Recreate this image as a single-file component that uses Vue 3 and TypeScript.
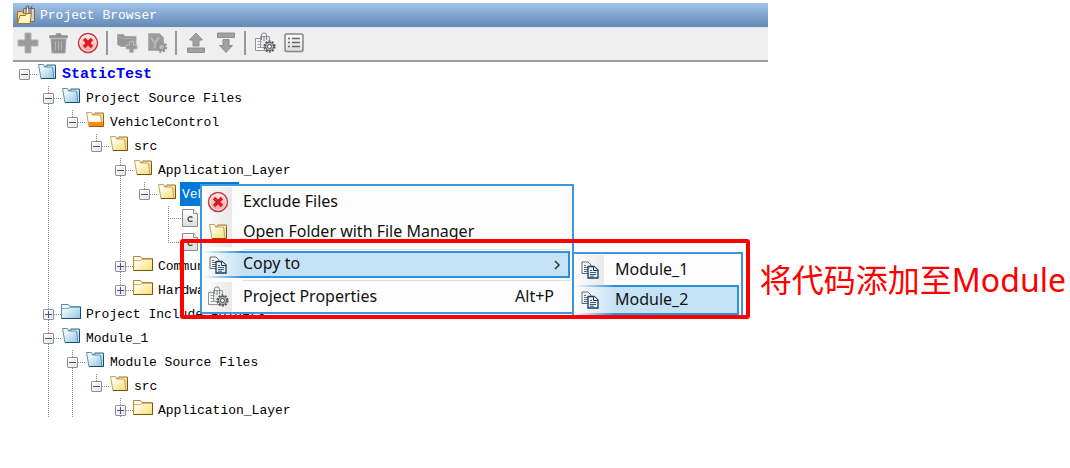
<script setup lang="ts">
type Guide = 'none' | 'full' | 'upper'

interface TreeRow {
  label: string
  guides: Guide[]
  node: Guide
  box?: 'minus' | 'plus'
  icon: string
  kind?: 'root' | 'selected' | 'file'
}

const o: Guide = 'none'
const f: Guide = 'full'
const u: Guide = 'upper'

const rows: TreeRow[] = [
  { label: 'StaticTest', guides: [], node: o, box: 'minus', icon: 'open-blue', kind: 'root' },
  { label: 'Project Source Files', guides: [o], node: f, box: 'minus', icon: 'open-blue' },
  { label: 'VehicleControl', guides: [o, f], node: u, box: 'minus', icon: 'open-orange' },
  { label: 'src', guides: [o, f, o], node: u, box: 'minus', icon: 'open-yellow' },
  { label: 'Application_Layer', guides: [o, f, o, o], node: f, box: 'minus', icon: 'open-yellow' },
  { label: 'Vehicle', guides: [o, f, o, o, f], node: u, box: 'minus', icon: 'open-yellow', kind: 'selected' },
  { label: '', guides: [o, f, o, o, f, o], node: f, icon: 'c-file', kind: 'file' },
  { label: '', guides: [o, f, o, o, f, o], node: u, icon: 'c-file', kind: 'file' },
  { label: 'Commun', guides: [o, f, o, o], node: f, box: 'plus', icon: 'closed-yellow' },
  { label: 'Hardware', guides: [o, f, o, o], node: u, box: 'plus', icon: 'closed-yellow' },
  { label: 'Project Include Folders', guides: [o], node: f, box: 'plus', icon: 'closed-blue' },
  { label: 'Module_1', guides: [o], node: f, box: 'minus', icon: 'open-blue' },
  { label: 'Module Source Files', guides: [o, f], node: f, box: 'minus', icon: 'open-blue' },
  { label: 'src', guides: [o, f, f], node: u, box: 'minus', icon: 'open-yellow' },
  { label: 'Application_Layer', guides: [o, f, f, o], node: f, box: 'plus', icon: 'closed-yellow' },
]

const toolGroups = [
  [
    { name: 'Add', icon: 'add' },
    { name: 'Delete', icon: 'trash' },
    { name: 'Exclude', icon: 'exclude' },
  ],
  [
    { name: 'Add folder', icon: 'folder-add' },
    { name: 'File settings', icon: 'file-gear' },
  ],
  [
    { name: 'Move up', icon: 'up' },
    { name: 'Move down', icon: 'down' },
  ],
  [
    { name: 'Project properties', icon: 'properties' },
    { name: 'List view', icon: 'list' },
  ],
]
</script>

<template>
  <svg class="defs" aria-hidden="true">
    <defs>
      <linearGradient id="blue" x1="0" y1="0" x2="1" y2="1">
        <stop offset="0.2" stop-color="#f6fcff" /><stop offset="1" stop-color="#8dc3e2" />
      </linearGradient>
      <linearGradient id="yellow" x1="0" y1="0" x2="1" y2="1">
        <stop offset="0.2" stop-color="#fffef2" /><stop offset="1" stop-color="#f7df6c" />
      </linearGradient>
      <linearGradient id="red" x1="0" y1="0" x2="0" y2="1">
        <stop offset="0" stop-color="#fff0f0" /><stop offset="1" stop-color="#f59a9a" />
      </linearGradient>
      <linearGradient id="paper" x1="0" y1="0" x2="0" y2="1">
        <stop offset="0" stop-color="#ffffff" /><stop offset="1" stop-color="#dcdcdc" />
      </linearGradient>
    </defs>
    <symbol id="open-blue" viewBox="0 0 20 18">
      <path d="M6 13V3.5h3l1-1.5h8.500v13" fill="#bfe0f0" stroke="#336687" />
      <path d="M11 3.500h6" stroke="#f2fbff" />
      <path d="M1.500 1.500h5l1 2.500h8l1.500 11.500H4z" fill="url(#blue)" stroke="#5590b2" />
      <path d="M4 15.500h14.500V5" fill="none" stroke="#1e4866" />
    </symbol>
    <symbol id="open-yellow" viewBox="0 0 20 18">
      <path d="M6 13V3.500h3l1-1.500h8.500v13" fill="#f3dfa4" stroke="#a5731f" />
      <path d="M11 3.500h6" stroke="#fffbe8" />
      <path d="M1.500 1.500h5l1 2.500h8l1.500 11.500H4z" fill="url(#yellow)" stroke="#c6a060" />
      <path d="M4 15.500h14.500V5" fill="none" stroke="#7d520f" />
    </symbol>
    <symbol id="open-orange" viewBox="0 0 20 18">
      <path d="M6 13V3.500h3l1-1.500h8.500v13" fill="#f3dfa4" stroke="#a5731f" />
      <path d="M1.500 1.500h5l1 2.500h8l1.500 11.500H4z" fill="#fffbed" stroke="#c6a060" />
      <path d="M3 11h15v4.500H4z" fill="#f78b16" />
      <path d="M4 15.500h14.500V5" fill="none" stroke="#a65508" />
    </symbol>
    <symbol id="closed-yellow" viewBox="0 0 20 18">
      <path d="M.500 1.500h7l1.500 2h10.500v12H.500z" fill="url(#yellow)" stroke="#b98a38" />
      <path d="M.500 15.500h19V4" fill="none" stroke="#7d520f" />
      <path d="M1 5.500h6l2-1h10" fill="none" stroke="#d8b368" />
    </symbol>
    <symbol id="closed-blue" viewBox="0 0 20 18">
      <path d="M.500 1.500h7l1.500 2h10.500v12H.500z" fill="url(#blue)" stroke="#5590b2" />
      <path d="M.500 15.500h19V4" fill="none" stroke="#1e4866" />
      <path d="M1 5.500h6l2-1h10" fill="none" stroke="#78abc9" />
    </symbol>
    <symbol id="c-file" viewBox="0 0 16 18">
      <path d="M.500.500h11l4 4v13H.500z" fill="url(#paper)" stroke="#8a8a8a" />
      <path d="M11.500.500v4h4" fill="#fff" stroke="#8a8a8a" />
      <path d="M10.500 8.500c-1.500-1.200-4.500-1-4.500 1.600s3 2.800 4.500 1.600" fill="none" stroke="#444" stroke-width="1.300" />
    </symbol>
    <symbol id="add" viewBox="0 0 22 22">
      <path d="M8 1h6v7h7v6h-7v7H8v-7H1V8h7z" fill="#9b9b9b" stroke="#b5b5b5" />
    </symbol>
    <symbol id="trash" viewBox="0 0 22 22">
      <path d="M2.500 3.500h6l1-2h4l1 2h6v2.500h-18zM4 7h15l-1 14H5z" fill="#909090" stroke="#a6a6a6" />
      <path d="M8.500 9v9.500M11.500 9v9.500M14.500 9v9.500" stroke="#b4b4b4" stroke-width="1.200" />
    </symbol>
    <symbol id="exclude" viewBox="0 0 22 22">
      <circle cx="11" cy="11" r="9.500" fill="url(#red)" stroke="#c73a40" stroke-width="1.500" />
      <circle cx="11" cy="11" r="8" fill="none" stroke="#ffdede" />
      <path d="M7 7l8 8M15 7l-8 8" stroke="#dc1822" stroke-width="3.400" />
    </symbol>
    <symbol id="folder-add" viewBox="0 0 22 22">
      <path d="M1.500 2.500h6l1.500 2h11v10H5l-3.500-2z" fill="#969696" stroke="#a9a9a9" />
      <path d="M2 4l4 2.500h11l1 8" fill="none" stroke="#b0b0b0" />
      <path d="M13.500 9.500h4V13H21v4h-3.500v3.500h-4V17H10v-4h3.500z" fill="#989898" stroke="#bcbcbc" />
    </symbol>
    <symbol id="file-gear" viewBox="0 0 22 22">
      <path d="M2.500 1.500h11l4 4v13h-15z" fill="#9c9c9c" stroke="#b2b2b2" />
      <path d="M5 6l4 5 4-6M9 11v5" fill="none" stroke="#bababa" stroke-width="2" />
      <circle cx="15.500" cy="15" r="4.800" fill="none" stroke="#999" stroke-width="2" stroke-dasharray="2.200 1.500" />
      <circle cx="15.500" cy="15" r="3.200" fill="#bcbcbc" stroke="#929292" stroke-width="1.800" />
    </symbol>
    <symbol id="up" viewBox="0 0 22 22">
      <path d="M11 1l6.500 7H14v6H8V8H4.500zM2.500 16h17v4.500h-17z" fill="#a0a0a0" stroke="#8e8e8e" />
    </symbol>
    <symbol id="down" viewBox="0 0 22 22">
      <path d="M2.500 1h17v4.500h-17zM8 7.500h6v6h3.500L11 20.500l-6.500-7H8z" fill="#a0a0a0" stroke="#8e8e8e" />
    </symbol>
    <symbol id="properties" viewBox="0 0 22 22">
      <path d="M1.500 6.500h11v12h-11z" fill="#f5f5f5" stroke="#929292" />
      <path d="M6.500 4.500h9v11h-9z" fill="#e6ebed" stroke="#9a9a9a" />
      <path d="M7.500 8V3q0-2 2.500-2t2.500 2v5M10 4v5" fill="none" stroke="#888" />
      <path d="M3.500 9.500h4M3.500 12.500h4M3.500 15.500h4" stroke="#8ba2ab" />
      <circle cx="15.500" cy="14.500" r="5.300" fill="none" stroke="#5a5a5a" stroke-width="1.600" stroke-dasharray="2.100 1.230" />
      <circle cx="15.500" cy="14.500" r="4.200" fill="#b4b4b4" stroke="#555" />
      <circle cx="15.500" cy="14.500" r="2" fill="#fff" stroke="#555" />
    </symbol>
    <symbol id="list" viewBox="0 0 22 22">
      <rect x="1" y="2" width="18" height="17.500" rx="2" fill="url(#paper)" stroke="#858585" stroke-width="1.500" />
      <path d="M4 6.500h2M4 10.500h2M4 14.500h2M8 6.500h8M8 10.500h8M8 14.500h8" stroke="#666" stroke-width="1.300" />
    </symbol>
    <symbol id="copy" viewBox="0 0 18 18">
      <path d="M1 1h6l3 3v8.500H1z" fill="#f8f8f8" stroke="#666" />
      <path d="M3 4.500h2M3 6.500h5M3 8.500h4M3 10.500h4" stroke="#666" />
      <path d="M7 5.500h6l4 3.500v8H7z" fill="#e7f1fa" stroke="#1d3c5a" stroke-width="1.300" />
      <path d="M12.500 5.500v4H17" fill="#fff" stroke="#1d3c5a" />
      <path d="M9 9.500h2M9 11.500h6M9 13.500h6M9 15.200h4" stroke="#345f88" />
    </symbol>
    <symbol id="project" viewBox="0 0 20 20">
      <path d="M7.500 3.500h11v13h-11z" fill="#d6d2c8" stroke="#7c6c50" />
      <path d="M10 9V3q0-2 1.500-2T13 3v7M15 9V3q0-2 1.500-2" fill="none" stroke="#5c5a56" />
      <path d="M11.500 3v6" stroke="#fff" />
      <path d="M1.500 18V6.500h5l1 2h6v10" fill="#f8e08a" stroke="#a47822" />
      <path d="M1.500 18.500L4 10.500h5.500l1-2h5l-1.500 10z" fill="#fff6c4" stroke="#a5771c" />
    </symbol>
  </svg>

  <main class="page">
    <header class="head">
      <h1 class="title">
        <svg class="title-icon"><use href="#project" /></svg>
        Project Browser
      </h1>
      <div class="toolbar" role="toolbar" aria-label="Project">
        <div v-for="(group, g) in toolGroups" :key="g" class="group">
          <button v-for="tool in group" :key="tool.name" type="button" class="tool" :aria-label="tool.name">
            <svg class="tool-icon"><use :href="'#' + tool.icon" /></svg>
          </button>
        </div>
      </div>
    </header>

    <ul class="tree">
      <li v-for="(row, r) in rows" :key="r" class="row" :class="row.kind">
        <span v-for="(guide, g) in row.guides" :key="g" class="cell" :class="guide"></span>
        <span class="cell branch" :class="row.node">
          <button v-if="row.box" type="button" class="box" :aria-label="(row.box === 'plus' ? 'Expand ' : 'Collapse ') + row.label">
            <svg class="sign" viewBox="0 0 9 9">
              <path :d="row.box === 'plus' ? 'M1 4.5h7M4.5 1v7' : 'M1 4.5h7'" stroke="#3a55a4" fill="none" />
            </svg>
          </button>
        </span>
        <svg class="node-icon"><use :href="'#' + row.icon" /></svg>
        <span v-if="row.label" class="label">{{ row.label }}</span>
      </li>
    </ul>

    <div class="menu main-menu" role="menu">
      <button type="button" class="item" role="menuitem">
        <span class="gutter"><svg class="tool-icon"><use href="#exclude" /></svg></span>
        <span class="text">Exclude Files</span>
      </button>
      <button type="button" class="item" role="menuitem">
        <span class="gutter"><svg class="folder-icon"><use href="#open-yellow" /></svg></span>
        <span class="text">Open Folder with File Manager</span>
      </button>
      <div class="rule" role="separator"></div>
      <button type="button" class="item active short" role="menuitem" aria-haspopup="true">
        <span class="gutter"><svg class="copy-icon"><use href="#copy" /></svg></span>
        <span class="text">Copy to</span>
        <svg class="chevron" viewBox="0 0 8 12"><path d="M2 2l4 4-4 4" fill="none" stroke="#333" stroke-width="1.500" /></svg>
      </button>
      <div class="rule" role="separator"></div>
      <button type="button" class="item" role="menuitem">
        <span class="gutter"><svg class="tool-icon"><use href="#properties" /></svg></span>
        <span class="text">Project Properties</span>
        <span class="shortcut">Alt+P</span>
      </button>
    </div>

    <div class="menu sub-menu" role="menu">
      <button type="button" class="item" role="menuitem">
        <span class="gutter"><svg class="copy-icon"><use href="#copy" /></svg></span>
        <span class="text">Module_1</span>
      </button>
      <button type="button" class="item active" role="menuitem">
        <span class="gutter"><svg class="copy-icon"><use href="#copy" /></svg></span>
        <span class="text">Module_2</span>
      </button>
    </div>

    <div class="frame"></div>
    <p class="note">将代码添加至Module</p>
  </main>
</template>

<style>
body {
  margin: 0;
  background: #fff;
}
</style>

<style scoped>
.defs {
  position: absolute;
  width: 0;
  height: 0;
}
button {
  padding: 0;
  border: 0;
  background: none;
  font: inherit;
  color: inherit;
}
svg {
  display: block;
  flex: none;
}
.page {
  position: relative;
  padding: 3px 302px 0 12px;
}
.head {
  margin-left: 1px;
}
.title {
  display: flex;
  align-items: center;
  gap: 4px;
  height: 24px;
  margin: 0;
  padding: 0 3px;
  background: linear-gradient(#a2c3ea, #6389b4);
  color: #fff;
  font: 13px "Liberation Mono", monospace;
}
.title-icon {
  width: 20px;
  height: 20px;
}
.toolbar {
  display: flex;
  height: 30px;
  padding-bottom: 2px;
  background: #efefef;
  border-top: 1px solid #dce6f1;
  border-bottom: 2px solid #9b9ea8;
}
.group {
  display: flex;
  align-items: center;
}
.group + .group::before {
  content: "";
  width: 2px;
  height: 24px;
  margin: 0 4px 0 3px;
  background: #999;
}
.tool {
  display: grid;
  place-items: center;
  width: 30px;
  height: 30px;
}
.tool-icon {
  width: 22px;
  height: 22px;
}
.tree {
  margin: 0;
  padding: 0;
  list-style: none;
  font: 13px "Liberation Mono", monospace;
  color: #000;
}
.row {
  display: flex;
  align-items: center;
  height: 24px;
}
.cell {
  position: relative;
  display: grid;
  place-items: center;
  flex: none;
  width: 24px;
  height: 24px;
}
.full::before,
.upper::before {
  content: "";
  position: absolute;
  top: 0;
  left: 12px;
  width: 1px;
  height: 24px;
  background: repeating-linear-gradient(#8c8c8c 0 1px, transparent 1px 2px);
}
.upper::before {
  height: 12px;
}
.row:last-child .full::before {
  height: 20px;
}
.branch::after {
  content: "";
  position: absolute;
  top: 12px;
  left: 12px;
  width: 13px;
  height: 1px;
  background: repeating-linear-gradient(90deg, #8c8c8c 0 1px, transparent 1px 2px);
}
.box {
  position: relative;
  z-index: 1;
  width: 11px;
  height: 11px;
  border: 1px solid #919191;
  border-radius: 1px;
  background: linear-gradient(135deg, #fff, #e4e4e4);
}
.sign {
  width: 9px;
  height: 9px;
}
.node-icon {
  width: 20px;
  height: 18px;
  margin: 0 3px 4px 1px;
}
.file .node-icon {
  width: 16px;
  margin: 0 0 0 2px;
}
.label {
  padding: 2px 2px 0;
  line-height: 22px;
  white-space: pre;
}
.root .label {
  font-size: 15px;
  font-weight: 700;
  color: #00f;
}
.selected .label {
  background: #0078d7;
  color: #fff;
}
.menu {
  position: absolute;
  box-sizing: border-box;
  border: 2px solid #3c97de;
  background: #fdfdfd;
  font: 16px/22px "Noto Sans", "Open Sans", sans-serif;
  color: #111;
}
.main-menu {
  top: 184px;
  left: 200px;
  width: 374px;
  padding: 1px 2px 0;
}
.sub-menu {
  top: 252px;
  left: 572px;
  width: 171px;
  padding: 1px 2px 0;
}
.item {
  display: flex;
  align-items: center;
  width: 100%;
  height: 30px;
  text-align: left;
}
.short {
  height: 27px;
}
.gutter {
  display: grid;
  place-items: center;
  width: 28px;
  height: 100%;
  margin-right: 11px;
  background: linear-gradient(90deg, #fcfcfc, #e9e9e9);
}
.text {
  flex: 1;
  white-space: nowrap;
}
.text,
.shortcut {
  padding-bottom: 3px;
}
.active {
  background: linear-gradient(90deg, #fdfdfd, #c5e1f5 40px);
  border: solid #2f8fd9;
  border-width: 2px 2px 2px 0;
  border-image: linear-gradient(90deg, #fdfdfd, #2f8fd9 40px) 2;
}
.active .gutter {
  background: none;
}
.folder-icon {
  width: 20px;
  height: 18px;
}
.copy-icon {
  width: 18px;
  height: 18px;
}
.chevron {
  width: 8px;
  height: 12px;
  margin-right: 7px;
}
.shortcut {
  margin-right: 16px;
}
.rule {
  height: 1px;
  margin: 0 0 0 39px;
  border: solid #fdfdfd;
  border-width: 2px 0 1px;
  background: #dedede;
}
.frame {
  position: absolute;
  top: 239px;
  left: 180px;
  box-sizing: border-box;
  width: 570px;
  height: 80px;
  border: 4px solid #f00;
  border-radius: 3px;
}
.note {
  position: absolute;
  top: 260px;
  right: 4px;
  margin: 0;
  font: 32px/40px "Noto Sans", "Noto Sans CJK SC", sans-serif;
  color: #f00;
  white-space: nowrap;
}
</style>
